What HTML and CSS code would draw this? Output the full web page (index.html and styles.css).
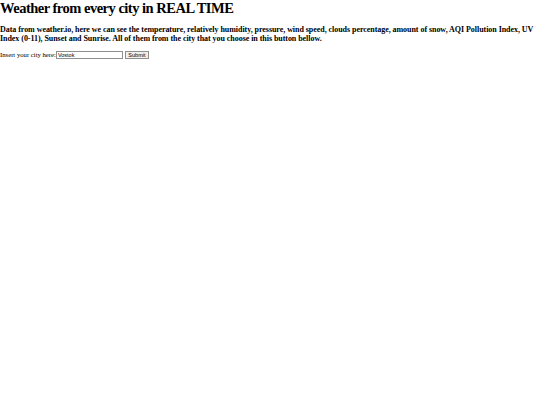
FILE: index.html
```html
<!DOCTYPE html>
<html>
<head>
<meta charset="utf-8">
<link rel="stylesheet" href="styles.css">
</head>
<body>
<h1 class="title">Weather from every city in REAL TIME</h1>
<h3 class="desc">Data from weather.io, here we can see the temperature, relatively humidity, pressure, wind speed, clouds percentage, amount of snow, AQI Pollution Index, UV Index (0-11), Sunset and Sunrise. All of them from the city that you choose in this button bellow.</h3>
<form class="form">
<label class="label">Insert your city here:</label><input class="city" type="text" value="Vostok"><button class="submit" type="button">Submit</button>
</form>
</body>
</html>
```
FILE: styles.css
```css
body {
  margin: 0;
  font-family: "Liberation Serif", "Times New Roman", serif;
  color: #000;
  background: #fff;
}
.title {
  font-size: 14.5px;
  letter-spacing: -0.5px;
  line-height: 16px;
  margin: 0 0 9px 0;
}
.desc {
  font-size: 8px;
  letter-spacing: -0.05px;
  line-height: 9px;
  margin: 0 0 7px 0;
}
.form {
  margin: 0;
  display: flex;
  align-items: center;
  height: 9px;
}
.label {
  font-size: 6.7px;
}
.city {
  font-family: "Liberation Sans", Arial, sans-serif;
  font-size: 5.5px;
  box-sizing: border-box;
  width: 67px;
  height: 8px;
  padding: 0 1px;
  margin: 0 2px 0 0;
  border: 1px solid #8f8f8f;
}
.submit {
  font-family: "Liberation Sans", Arial, sans-serif;
  font-size: 5.5px;
  box-sizing: border-box;
  width: 24px;
  padding: 0;
  height: 8px;
  line-height: 6px;
  border: 1px solid #8f8f8f;
  background: #efefef;
  margin: 0;
}
```
